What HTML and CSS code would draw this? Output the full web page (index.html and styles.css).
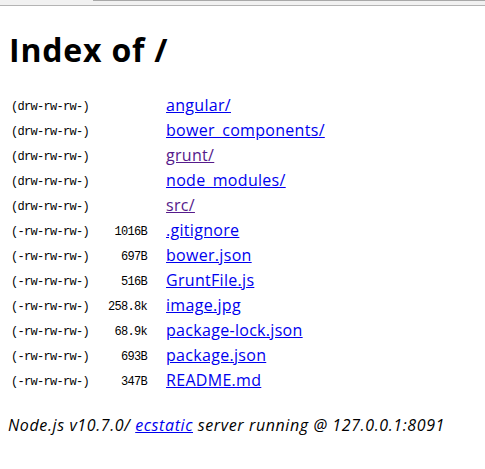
FILE: index.html
```html
<!doctype html>
<html>
<head>
<meta charset="utf-8">
<title>Index of /</title>
<link rel="stylesheet" href="styles.css">
</head>
<body>
<div class="chrome"><div class="chrome-tab"></div></div>
<div class="page">
<h1>Index of /</h1>
<table>
<tr><td><code>(drw-rw-rw-)</code></td><td class="size"><code></code></td><td class="name"><a href="#a">angular/</a></td></tr>
<tr><td><code>(drw-rw-rw-)</code></td><td class="size"><code></code></td><td class="name"><a href="#b">bower_components/</a></td></tr>
<tr><td><code>(drw-rw-rw-)</code></td><td class="size"><code></code></td><td class="name"><a class="visited" href="#c">grunt/</a></td></tr>
<tr><td><code>(drw-rw-rw-)</code></td><td class="size"><code></code></td><td class="name"><a href="#d">node_modules/</a></td></tr>
<tr><td><code>(drw-rw-rw-)</code></td><td class="size"><code></code></td><td class="name"><a class="visited" href="#e">src/</a></td></tr>
<tr><td><code>(-rw-rw-rw-)</code></td><td class="size"><code>1016B</code></td><td class="name"><a href="#f">.gitignore</a></td></tr>
<tr><td><code>(-rw-rw-rw-)</code></td><td class="size"><code>697B</code></td><td class="name"><a href="#g">bower.json</a></td></tr>
<tr><td><code>(-rw-rw-rw-)</code></td><td class="size"><code>516B</code></td><td class="name"><a href="#h">GruntFile.js</a></td></tr>
<tr><td><code>(-rw-rw-rw-)</code></td><td class="size"><code>258.8k</code></td><td class="name"><a href="#i">image.jpg</a></td></tr>
<tr><td><code>(-rw-rw-rw-)</code></td><td class="size"><code>68.9k</code></td><td class="name"><a href="#j">package-lock.json</a></td></tr>
<tr><td><code>(-rw-rw-rw-)</code></td><td class="size"><code>693B</code></td><td class="name"><a href="#k">package.json</a></td></tr>
<tr><td><code>(-rw-rw-rw-)</code></td><td class="size"><code>347B</code></td><td class="name"><a href="#l">README.md</a></td></tr>
</table>
<br>
<address>Node.js v10.7.0/ <a href="#m">ecstatic</a> server running @ 127.0.0.1:8091</address>
</div>
</body>
</html>
```

FILE: styles.css
```css
html, body {
  margin: 0;
  padding: 0;
  background: #ffffff;
}
body {
  font-family: "Open Sans", "Noto Sans", sans-serif;
  font-size: 16px;
  line-height: 21px;
  color: #000;
}
.chrome {
  height: 5px;
  background: #f1f1f1;
  border-bottom: 1px solid #b4b4b4;
  display: flex;
  justify-content: flex-end;
}
.chrome-tab {
  width: 392px;
  height: 1px;
  background: #a8a8a8;
}
.page {
  margin: 8px;
}
h1 {
  font-size: 32px;
  line-height: 42px;
  font-weight: 700;
  letter-spacing: 0.8px;
  margin: 22.5px 0 21.44px;
  padding-left: 1px;
}
table {
  border-spacing: 2px;
}
td {
  padding: 1px;
  height: 21px;
  line-height: 21px;
  vertical-align: middle;
}
code {
  font-family: "Liberation Mono", monospace;
  font-size: 12px;
  letter-spacing: -0.7px;
  line-height: 1;
  vertical-align: middle;
}
.size {
  text-align: right;
  padding-left: 16px;
}
.name {
  padding-left: 16px;
  letter-spacing: 0.3px;
}
a {
  color: #0000ee;
  text-decoration: underline;
}
a.visited {
  color: #551a8b;
}
address {
  font-style: italic;
  letter-spacing: 0.6px;
}
```
